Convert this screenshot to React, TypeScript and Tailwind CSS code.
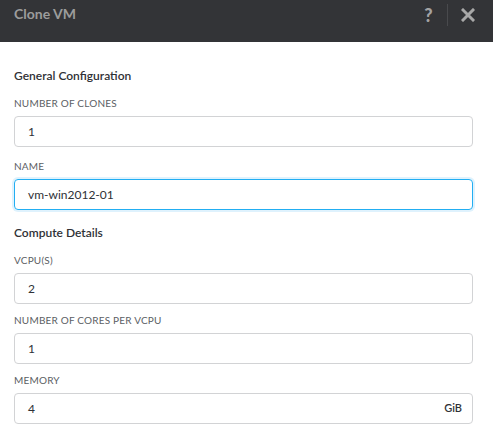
import React from 'react'

function Field({ label, value, suffix, focused, gap = 'mb-[12px]' }: { label: string; value: string; suffix?: string; focused?: boolean; gap?: string }) {
  return (
    <div className={gap}>
      <div className="text-[10px] leading-[14px] uppercase tracking-[0.2px] text-[#5b5e63] mb-[6px]">{label}</div>
      <div
        className={`h-[31px] rounded-[4px] border flex items-center pl-[13px] pr-[10px] text-[12px] text-[#2f3136] ${
          focused ? 'border-[#22aef2] shadow-[0_0_0_2px_#dff2fd]' : 'border-[#d2d3d5]'
        }`}
      >
        <span className="flex-1">{value}</span>
        {suffix && <span className="text-[11px] font-semibold text-[#2f3136]">{suffix}</span>}
      </div>
    </div>
  )
}

export default function App() {
  return (
    <div className="w-[493px] h-[432px] bg-white overflow-hidden" style={{ fontFamily: 'Lato, "Open Sans", sans-serif' }}>
      {/* header */}
      <div className="h-[42px] bg-[#333437] flex items-start justify-between pl-[14px] pr-[18px] pt-[4px]">
        <div className="text-[14px] font-bold text-[#9c9c9c] leading-[20px]">Clone VM</div>
        <div className="flex items-center h-[22px]">
          <span className="text-[18px] font-black text-[#a3a3a3] leading-none w-[11px] text-center">?</span>
          <div className="w-px h-[22px] bg-[#494a4d] mx-[13px]" />
          <svg width="14" height="14" viewBox="0 0 14 14" className="text-[#a8a8a8]">
            <path d="M2 2 L12 12 M12 2 L2 12" stroke="currentColor" strokeWidth="3" strokeLinecap="square" />
          </svg>
        </div>
      </div>

      {/* body */}
      <div className="pl-[14px] pr-[20px] pt-[26px]">
        <div className="text-[12px] font-semibold text-[#2f3136] leading-[16px] mb-[12px]">General Configuration</div>
        <Field label="Number of Clones" value="1" />
        <Field label="Name" value="vm-win2012-01" focused />
        <div className="text-[12px] font-semibold text-[#2f3136] leading-[16px] mb-[12px] mt-[15px]">Compute Details</div>
        <Field label="vCPU(s)" value="2" gap="mb-[9px]" />
        <Field label="Number of Cores per vCPU" value="1" gap="mb-[9px]" />
        <Field label="Memory" value="4" suffix="GiB" gap="mb-[9px]" />
      </div>
    </div>
  )
}
